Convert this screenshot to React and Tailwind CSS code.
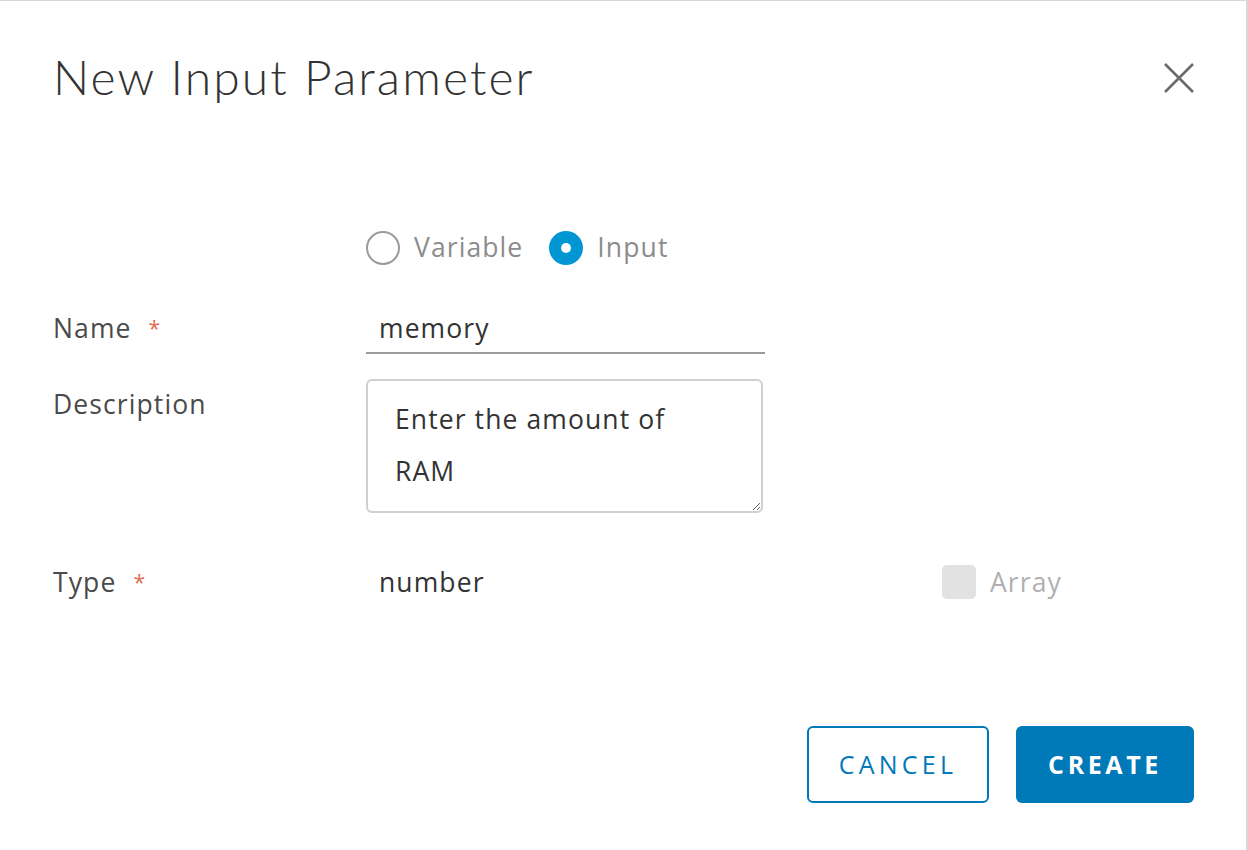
import { useState } from "react";

const body = { fontFamily: '"Open Sans", "Noto Sans", sans-serif' };
const title = { fontFamily: '"Lato", "Open Sans", sans-serif' };

function Radio({ checked, label, onClick }) {
  return (
    <button type="button" onClick={onClick} className="flex items-center gap-[14px]">
      {checked ? (
        <span className="w-[34px] h-[34px] rounded-full bg-[#0095d3] flex items-center justify-center">
          <span className="w-[10px] h-[10px] rounded-full bg-white" />
        </span>
      ) : (
        <span className="w-[34px] h-[34px] rounded-full border-2 border-[#9a9a9a] bg-white" />
      )}
      <span className="text-[26.5px] tracking-[1.1px] text-[#8c8c8c]">{label}</span>
    </button>
  );
}

function Label({ children, required }) {
  return (
    <div className="w-[313px] shrink-0 text-[26.5px] tracking-[1.1px] text-[#4a4a4a] leading-[36px]">
      {children}
      {required && <span className="text-[#e06b52] text-[21px] align-top ml-[17px]">*</span>}
    </div>
  );
}

export default function App() {
  const [kind, setKind] = useState("input");
  const [name, setName] = useState("memory");
  const [desc, setDesc] = useState("Enter the amount of RAM");

  return (
    <div style={body} className="w-[1248px] h-[850px] bg-white border-t border-r-2 border-[#d8d8d8] flex flex-col">
      <div className="flex items-start justify-between pl-[53px] pr-[50px] pt-[44px]">
        <h1 style={title} className="text-[48px] font-light text-[#333] leading-[64px] tracking-[2.1px]">
          New Input Parameter
        </h1>
        <button type="button" className="mt-[16px] w-[34px] h-[34px] text-[#6b6b6b]">
          <svg viewBox="0 0 34 34" width="34" height="34" fill="none" stroke="currentColor" strokeWidth="2.6">
            <path d="M3 3 L31 31 M31 3 L3 31" />
          </svg>
        </button>
      </div>

      <div className="pl-[53px] pt-[119px] flex flex-col">
        <div className="flex items-center pl-[313px] gap-[26px] h-[40px]">
          <Radio checked={kind === "variable"} label="Variable" onClick={() => setKind("variable")} />
          <Radio checked={kind === "input"} label="Input" onClick={() => setKind("input")} />
        </div>

        <div className="flex items-center mt-[34px]">
          <Label required>Name</Label>
          <input
            value={name}
            onChange={(e) => setName(e.target.value)}
            className="w-[399px] h-[52px] px-[13px] pt-[2px] text-[26.5px] tracking-[1.1px] text-[#333] border-b-2 border-[#9b9b9b] outline-none"
          />
        </div>

        <div className="flex items-start mt-[25px]">
          <div className="pt-[7px]">
            <Label>Description</Label>
          </div>
          <textarea
            value={desc}
            onChange={(e) => setDesc(e.target.value)}
            className="w-[397px] h-[134px] pl-[27px] pr-[50px] py-[12px] text-[26.5px] tracking-[1.1px] leading-[52px] text-[#333] border-2 border-[#d0d0d0] rounded-[6px] outline-none resize"
          />
        </div>

        <div className="flex items-center mt-[51px]">
          <Label required>Type</Label>
          <span className="pl-[13px] w-[576px] text-[26.5px] tracking-[1.1px] text-[#333] leading-[36px]">number</span>
          <span className="w-[34px] h-[34px] rounded-[5px] bg-[#e2e2e2]" />
          <span className="ml-[14px] text-[26.5px] tracking-[1.1px] text-[#b0b0b0] leading-[36px]">Array</span>
        </div>
      </div>

      <div className="flex justify-end gap-[27px] pr-[52px] mt-auto mb-[47px]">
        <button type="button" className="w-[182px] h-[77px] rounded-[6px] border-2 border-[#0079b8] text-[#0079b8] text-[25px] font-medium tracking-[4.2px]">
          CANCEL
        </button>
        <button type="button" className="w-[178px] h-[77px] rounded-[6px] bg-[#0079b8] text-white text-[25px] font-bold tracking-[3.6px]">
          CREATE
        </button>
      </div>
    </div>
  );
}
